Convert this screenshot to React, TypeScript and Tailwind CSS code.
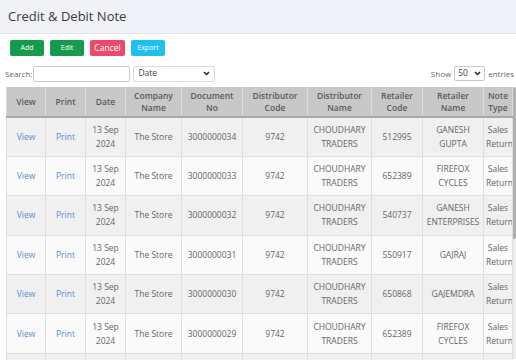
import React from "react";

type Row = {
  doc: string;
  retCode: string;
  retName: [string, string?];
};

const ROWS: Row[] = [
  { doc: "3000000034", retCode: "512995", retName: ["GANESH", "GUPTA"] },
  { doc: "3000000033", retCode: "652389", retName: ["FIREFOX", "CYCLES"] },
  { doc: "3000000032", retCode: "540737", retName: ["GANESH", "ENTERPRISES"] },
  { doc: "3000000031", retCode: "550917", retName: ["GAJRAJ"] },
  { doc: "3000000030", retCode: "650868", retName: ["GAJEMDRA"] },
  { doc: "3000000029", retCode: "652389", retName: ["FIREFOX", "CYCLES"] },
  { doc: "3000000028", retCode: "652389", retName: ["FIREFOX", "CYCLES"] },
];

const HEADERS: { label: [string, string?]; w: string }[] = [
  { label: ["View"], w: "w-[39px]" },
  { label: ["Print"], w: "w-[40px]" },
  { label: ["Date"], w: "w-[40px]" },
  { label: ["Company", "Name"], w: "w-[56px]" },
  { label: ["Document", "No"], w: "w-[61px]" },
  { label: ["Distributor", "Code"], w: "w-[65px]" },
  { label: ["Distributor", "Name"], w: "w-[64px]" },
  { label: ["Retailer", "Code"], w: "w-[51px]" },
  { label: ["Retailer", "Name"], w: "w-[61px]" },
  { label: ["Note", "Type"], w: "w-[29px]" },
];

function TwoLine({ a, b }: { a: string; b?: string }) {
  return (
    <>
      {a}
      {b && (
        <>
          <br />
          {b}
        </>
      )}
    </>
  );
}

export default function App() {
  return (
    <div className="w-[516px] h-[360px] overflow-hidden bg-white text-[#666] font-['Open_Sans','Liberation_Sans',sans-serif]">
      <div className="h-[34px] bg-[#f1f2f7] border-b border-[#e4e5ea] flex items-center px-[8px]">
        <h1 className="text-[13px] text-[#3a3a3a]">Credit &amp; Debit Note</h1>
      </div>

      <div className="flex gap-[6px] pl-[10px] pt-[6px]">
        <button className="w-[34px] h-[16px] rounded-[2px] bg-[#169b4e] text-white text-[7px]">Add</button>
        <button className="w-[34px] h-[16px] rounded-[2px] bg-[#169b4e] text-white text-[7px]">Edit</button>
        <button className="w-[35px] h-[16px] rounded-[2px] bg-[#ec4a6c] text-white text-[8.5px]">Cancel</button>
        <button className="w-[34px] h-[16px] rounded-[2px] bg-[#1ec0ef] text-white text-[7px]">Export</button>
      </div>

      <div className="flex items-center mt-[9px] pl-[5px] pr-[2px] h-[17px]">
        <span className="text-[8px] text-[#666]">Search:</span>
        <div className="ml-[1px] w-[97px] h-[16px] border border-[#c9c9c9] rounded-[2px] bg-white" />
        <div className="ml-[3px] w-[82px] h-[16px] border border-[#d9d9d9] rounded-[2px] bg-white flex items-center justify-between px-[4px]">
          <span className="text-[8.5px] text-[#444]">Date</span>
          <svg width="7" height="5" viewBox="0 0 7 5"><path d="M1 1l2.5 2.5L6 1" stroke="#222" strokeWidth="1.5" fill="none" /></svg>
        </div>
        <div className="ml-auto flex items-center">
          <span className="text-[8px] text-[#666]">Show</span>
          <div className="ml-[3px] w-[31px] h-[15px] border border-[#c9c9c9] rounded-[2px] flex items-center justify-between px-[3px]">
            <span className="text-[8.5px] text-[#444]">50</span>
            <svg width="7" height="5" viewBox="0 0 7 5"><path d="M1 1l2.5 2.5L6 1" stroke="#222" strokeWidth="1.5" fill="none" /></svg>
          </div>
          <span className="ml-[3px] text-[8px] text-[#666] whitespace-nowrap">entries</span>
        </div>
      </div>

      <div className="relative mt-[5px] ml-[6px] w-[510px]">
        <table className="border-collapse table-fixed w-[506px] text-[8.5px] leading-[14px] text-center">
          <thead>
            <tr className="h-[30px] bg-[#c8c8c8]">
              {HEADERS.map((h) => (
                <th
                  key={h.label.join(" ")}
                  className={`${h.w} border-x border-[#dcdcdc] border-b-2 border-b-[#a9a9a9] font-semibold text-[8.5px] text-[#5a5a5a] leading-[12px] px-[2px] overflow-hidden whitespace-nowrap`}
                >
                  <TwoLine a={h.label[0]} b={h.label[1]} />
                </th>
              ))}
            </tr>
          </thead>
          <tbody>
            {ROWS.map((r, i) => (
              <tr key={r.doc} className={`h-[39.4px] ${i % 2 === 0 ? "bg-[#f0f0f0]" : "bg-[#fafafa]"}`}>
                <td className="border border-[#dedede] text-[#5b8ad0]">View</td>
                <td className="border border-[#dedede] text-[#5b8ad0]">Print</td>
                <td className="border border-[#dedede]">13 Sep<br />2024</td>
                <td className="border border-[#dedede]">The Store</td>
                <td className="border border-[#dedede]">{r.doc}</td>
                <td className="border border-[#dedede]">9742</td>
                <td className="border border-[#dedede]">CHOUDHARY<br />TRADERS</td>
                <td className="border border-[#dedede]">{r.retCode}</td>
                <td className="border border-[#dedede] whitespace-nowrap">
                  <TwoLine a={r.retName[0]} b={r.retName[1]} />
                </td>
                <td className="border border-[#dedede] whitespace-nowrap overflow-hidden px-[2px]">Sales<br />Return</td>
              </tr>
            ))}
          </tbody>
        </table>
        <div className="absolute right-0 top-0 w-[3px] h-[272px] bg-[#ececec]">
          <div className="w-[3px] h-[152px] bg-[#b0b0b0] rounded-[2px]" />
        </div>
      </div>
    </div>
  );
}
